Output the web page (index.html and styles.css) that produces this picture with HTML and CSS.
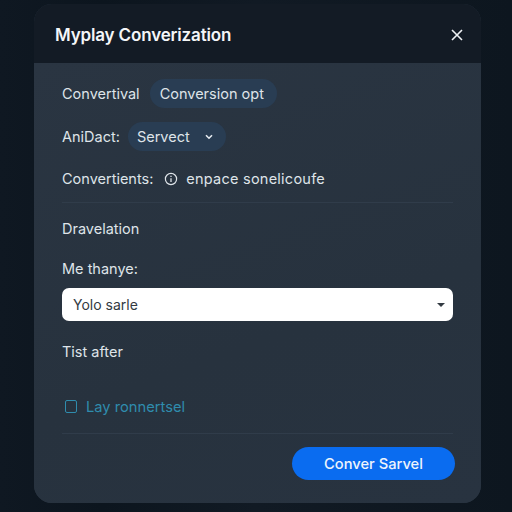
FILE: index.html
```html
<!DOCTYPE html>
<html lang="en">
<head>
<meta charset="utf-8">
<title>Myplay Converization</title>
<link rel="stylesheet" href="styles.css">
</head>
<body>
<div class="modal">
  <header class="head">
    <h1 class="title">Myplay Converization</h1>
    <svg class="close" width="12" height="12" viewBox="0 0 12 12"><path d="M1 1L11 11M11 1L1 11" stroke="#eef1f4" stroke-width="1.6" fill="none"/></svg>
  </header>
  <main class="body">
    <div class="row r1"><span class="txt">Convertival</span><span class="pill pill-a">Conversion opt</span></div>
    <div class="row r2"><span class="txt">AniDact:</span><span class="pill pill-b">Servect<svg class="chev" width="8" height="6" viewBox="0 0 8 6"><path d="M1 1.2L4 4.2L7 1.2" stroke="#e6ebf0" stroke-width="1.6" fill="none"/></svg></span></div>
    <div class="row r3"><span class="txt">Convertients:</span>
      <svg class="info" width="14" height="14" viewBox="0 0 14 14"><circle cx="7" cy="7" r="5.6" stroke="#dfe4e9" stroke-width="1.2" fill="none"/><path d="M7 6.2V10M7 3.8V5" stroke="#dfe4e9" stroke-width="1.3"/></svg>
      <span class="txt wide">enpace sonelicoufe</span></div>
    <div class="rule"></div>
    <div class="txt l1">Dravelation</div>
    <div class="txt l2">Me thanye:</div>
    <div class="select"><span>Yolo sarle</span><span class="caret"></span></div>
    <div class="txt l3">Tist after</div>
    <div class="link"><span class="box"></span><span>Lay ronnertsel</span></div>
    <div class="rule r-b"></div>
    <div class="foot"><button class="cta">Conver Sarvel</button></div>
  </main>
</div>
</body>
</html>
```
FILE: styles.css
```css
html, body { margin: 0; height: 100%; }
body {
  width: 512px; height: 512px; overflow: hidden;
  background: linear-gradient(90deg, #0f1822 0%, #0c151e 20%, #111a24 50%, #0d161f 100%);
  font-family: Inter, "Liberation Sans", sans-serif;
  color: #e2e7ec;
  padding: 4px 31px 9px 34px;
  box-sizing: border-box;
}
.modal {
  height: 499px; border-radius: 18px; overflow: hidden;
  display: flex; flex-direction: column;
  background: #27323f;
}
.head {
  height: 59px; flex: none; background: #131b25;
  display: flex; align-items: center; justify-content: space-between;
  padding: 2px 18px 0 21px; box-sizing: border-box;
}
.title { margin: 0; font-size: 17px; font-weight: 600; color: #f4f6f8; letter-spacing: -0.15px; }
.body {
  flex: 1; padding: 16px 28px 0 28px; display: flex; flex-direction: column;
  background: linear-gradient(160deg, #2a3542 0%, #27323e 60%, #283340 100%);
}
.txt { font-size: 14.5px; color: #dfe4e9; }
.wide { letter-spacing: 0.24px; }
.row { display: flex; align-items: center; height: 29px; }
.r1 { gap: 10px; }
.r2 { gap: 8px; margin-top: 14px; }
.r3 { margin-top: 13px; }
.info { margin: 0 8px 0 11px; }
.pill { font-size: 14.5px; height: 29px; border-radius: 15px; background: #293d53; display: flex; align-items: center; padding: 0 13px 0 10px; box-sizing: border-box; color: #dfe4e9; }
.pill-b { gap: 15px; padding: 0 13px 0 9px; }
.rule { height: 1px; background: #303c4a; margin-top: 9px; flex: none; }
.l1 { margin-top: 17px; line-height: 17px; }
.l2 { margin-top: 23px; line-height: 17px; }
.select {
  margin-top: 11px; height: 33px; background: #fff; border-radius: 7px; flex: none;
  display: flex; align-items: center; justify-content: space-between;
  padding: 0 8px 0 11px; font-size: 14px; color: #333a42;
}
.caret { width: 0; height: 0; border-left: 4px solid transparent; border-right: 4px solid transparent; border-top: 4px solid #333a42; }
.l3 { margin-top: 22px; line-height: 17px; }
.link { display: flex; align-items: center; gap: 9px; margin-top: 38px; font-size: 14.7px; color: #2f8cad; height: 17px; padding-left: 3px; }
.box { width: 10px; height: 11px; flex: none; border: 1.5px solid #2f8cad; border-radius: 2px; }
.r-b { margin-top: 18px; }
.foot { display: flex; justify-content: flex-end; margin-top: 13px; margin-right: -2px; }
.cta {
  width: 163px; height: 33px; border: 0; border-radius: 17px; background: #0a6cf0;
  color: #eef4fc; font: 500 14.7px Inter, "Liberation Sans", sans-serif;
}
```
